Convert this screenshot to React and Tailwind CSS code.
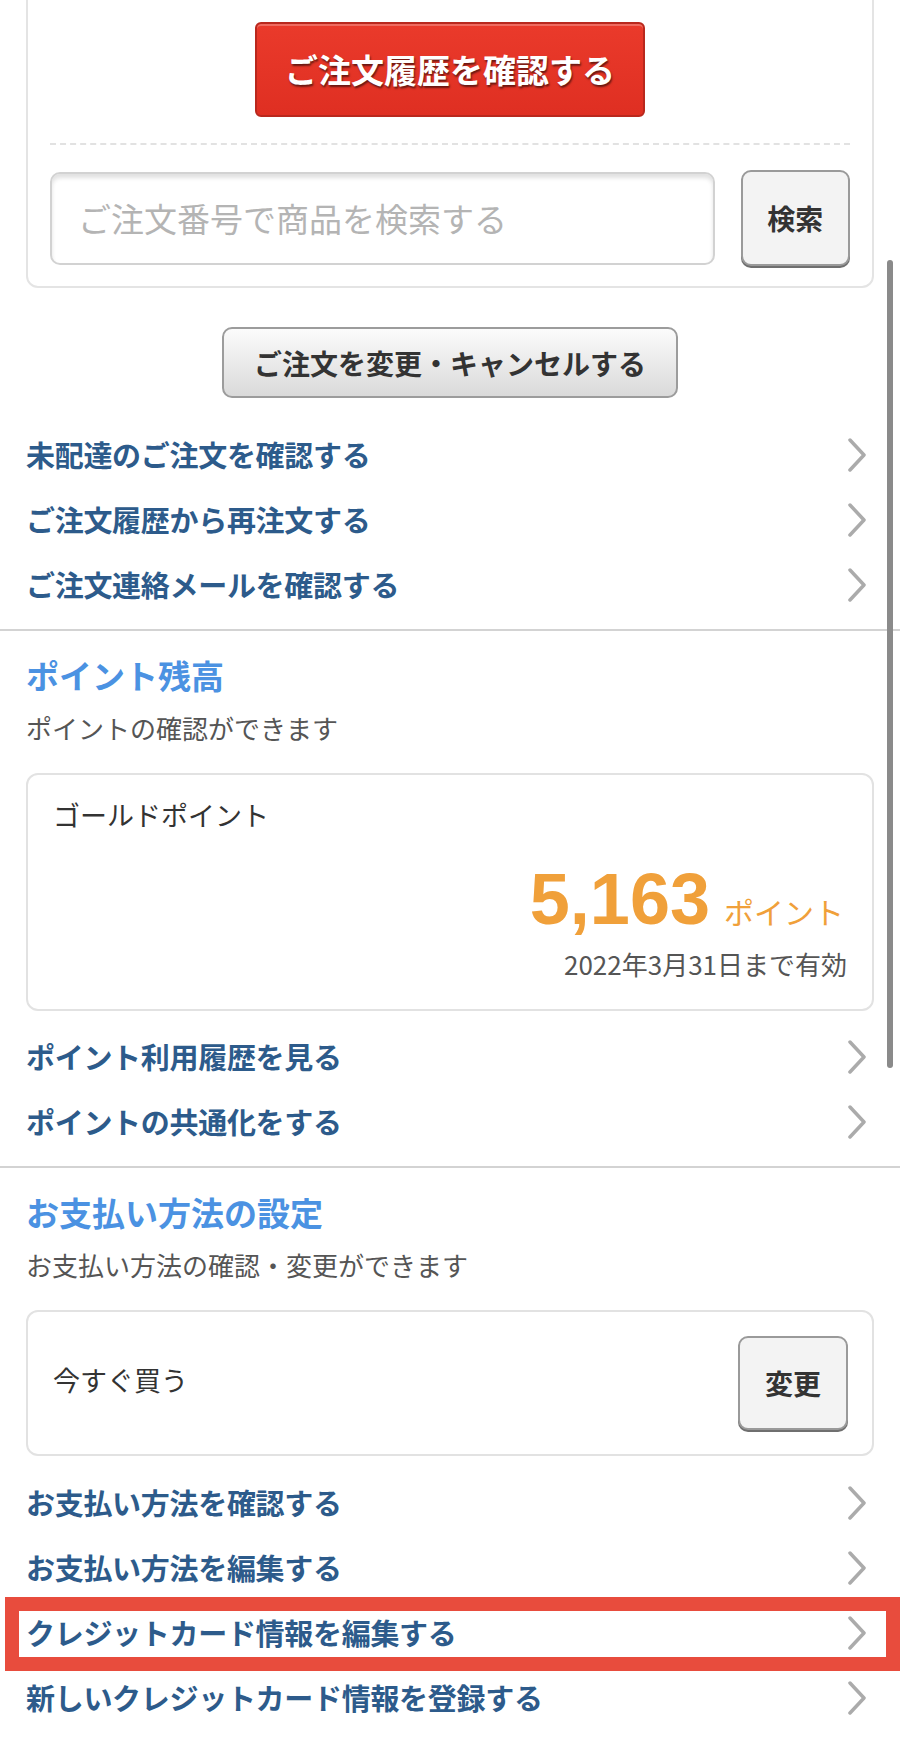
import React from 'react';

const Chevron = () => (
  <svg width="20" height="34" viewBox="0 0 20 34" fill="none" className="shrink-0">
    <polyline points="3,2 17,17 3,32" stroke="#ababab" strokeWidth="3.5" strokeLinecap="round" strokeLinejoin="round" />
  </svg>
);

function LinkRow({ label }) {
  return (
    <div className="h-[65px] flex items-center justify-between pl-[26px] pr-[33px]">
      <span className="text-[29px] font-bold text-[#2d5b8b] leading-none tracking-[-0.3px]">{label}</span>
      <Chevron />
    </div>
  );
}

function SectionHead({ title, sub }) {
  return (
    <div className="px-[26px]">
      <h2 className="mt-[24px] h-[40px] leading-[40px] text-[33px] font-bold text-[#4b92e2]">{title}</h2>
      <p className="mt-[15px] h-[36px] leading-[36px] text-[26px] text-[#555]">{sub}</p>
    </div>
  );
}

export default function App() {
  return (
    <div className="relative w-[900px] h-[1743px] overflow-hidden bg-white font-['Noto_Sans_CJK_JP',sans-serif]">
      {/* order card */}
      <div className="mx-[26px] -mt-[12px] h-[300px] border-2 border-[#e4e4e4] rounded-[12px] px-[22px] pt-[32px]">
        <div className="mx-auto w-[390px] h-[95px] flex items-center justify-center rounded-[6px] border-2 border-[#b9281d] bg-gradient-to-b from-[#ea3a2b] to-[#df2f22] shadow-[inset_0_2px_0_rgba(255,255,255,0.25)]">
          <span className="text-[33px] font-bold text-white leading-none [text-shadow:1px_2px_2px_rgba(0,0,0,0.55)]">ご注文履歴を確認する</span>
        </div>
        <div className="mt-[26px] border-t-2 border-dashed border-[#e2e2e2]" />
        <div className="mt-[25px] flex items-center gap-[26px]">
          <div className="w-[668px] h-[93px] rounded-[10px] border-2 border-[#d2d2d2] shadow-[inset_0_4px_4px_rgba(0,0,0,0.12)] flex items-center pl-[26px]">
            <span className="text-[33px] text-[#b4b4b4] leading-none">ご注文番号で商品を検索する</span>
          </div>
          <div className="w-[110px] h-[96px] rounded-[10px] border-2 border-[#9a9a9a] bg-[#f3f3f3] shadow-[0_2px_0_#6f6f6f] flex items-center justify-center">
            <span className="text-[28px] font-bold text-[#333] leading-none">検索</span>
          </div>
        </div>
      </div>

      <div className="mt-[39px] mx-auto w-[456px] h-[71px] rounded-[10px] border-2 border-[#9c9c9c] bg-gradient-to-b from-[#fbfbfb] to-[#dadada] flex items-center justify-center">
        <span className="text-[28px] font-bold text-[#333] leading-none">ご注文を変更・キャンセルする</span>
      </div>

      <div className="mt-[24px]">
        <LinkRow label="未配達のご注文を確認する" />
        <LinkRow label="ご注文履歴から再注文する" />
        <LinkRow label="ご注文連絡メールを確認する" />
      </div>

      <div className="mt-[12px] w-full h-[2px] bg-[#d3d3d3]" />

      {/* points */}
      <SectionHead title="ポイント残高" sub="ポイントの確認ができます" />
      <div className="mx-[26px] mt-[27px] h-[238px] border-2 border-[#e2e2e2] rounded-[12px] px-[25px] pt-[20px] flex flex-col">
        <p className="h-[40px] leading-[40px] text-[27px] text-[#333]">ゴールドポイント</p>
        <div className="mt-[29px] flex items-baseline justify-end pr-[3px]">
          <span className="font-['Liberation_Sans',sans-serif] text-[72px] font-bold text-[#f0a03a] leading-[70px]">5,163</span>
          <span className="ml-[14px] text-[30px] text-[#f0a03a] leading-none">ポイント</span>
        </div>
        <p className="mt-[14px] text-right text-[26px] leading-[32px] text-[#555]">2022年3月31日まで有効</p>
      </div>

      <div className="mt-[13px]">
        <LinkRow label="ポイント利用履歴を見る" />
        <LinkRow label="ポイントの共通化をする" />
      </div>

      <div className="mt-[12px] w-full h-[2px] bg-[#d3d3d3]" />

      {/* payment */}
      <SectionHead title="お支払い方法の設定" sub="お支払い方法の確認・変更ができます" />
      <div className="mx-[26px] mt-[27px] h-[146px] border-2 border-[#e2e2e2] rounded-[12px] pl-[25px] pr-[24px] flex items-center justify-between">
        <span className="text-[27px] text-[#333] leading-none -mt-[8px]">今すぐ買う</span>
        <div className="w-[110px] h-[94px] rounded-[10px] border-2 border-[#9a9a9a] bg-[#f3f3f3] shadow-[0_2px_0_#6f6f6f] flex items-center justify-center">
          <span className="text-[28px] font-bold text-[#333] leading-none">変更</span>
        </div>
      </div>

      <div className="mt-[14px]">
        <LinkRow label="お支払い方法を確認する" />
        <LinkRow label="お支払い方法を編集する" />
        <LinkRow label="クレジットカード情報を編集する" />
        <LinkRow label="新しいクレジットカード情報を登録する" />
      </div>

      {/* highlight annotation */}
      <div className="absolute left-[5px] top-[1597px] w-[895px] h-[74px] border-[14px] border-[#e84c3d]" />

      {/* scrollbar */}
      <div className="absolute left-[887px] top-[260px] w-[6px] h-[808px] rounded-full bg-[#8a8a8a]" />
    </div>
  );
}
